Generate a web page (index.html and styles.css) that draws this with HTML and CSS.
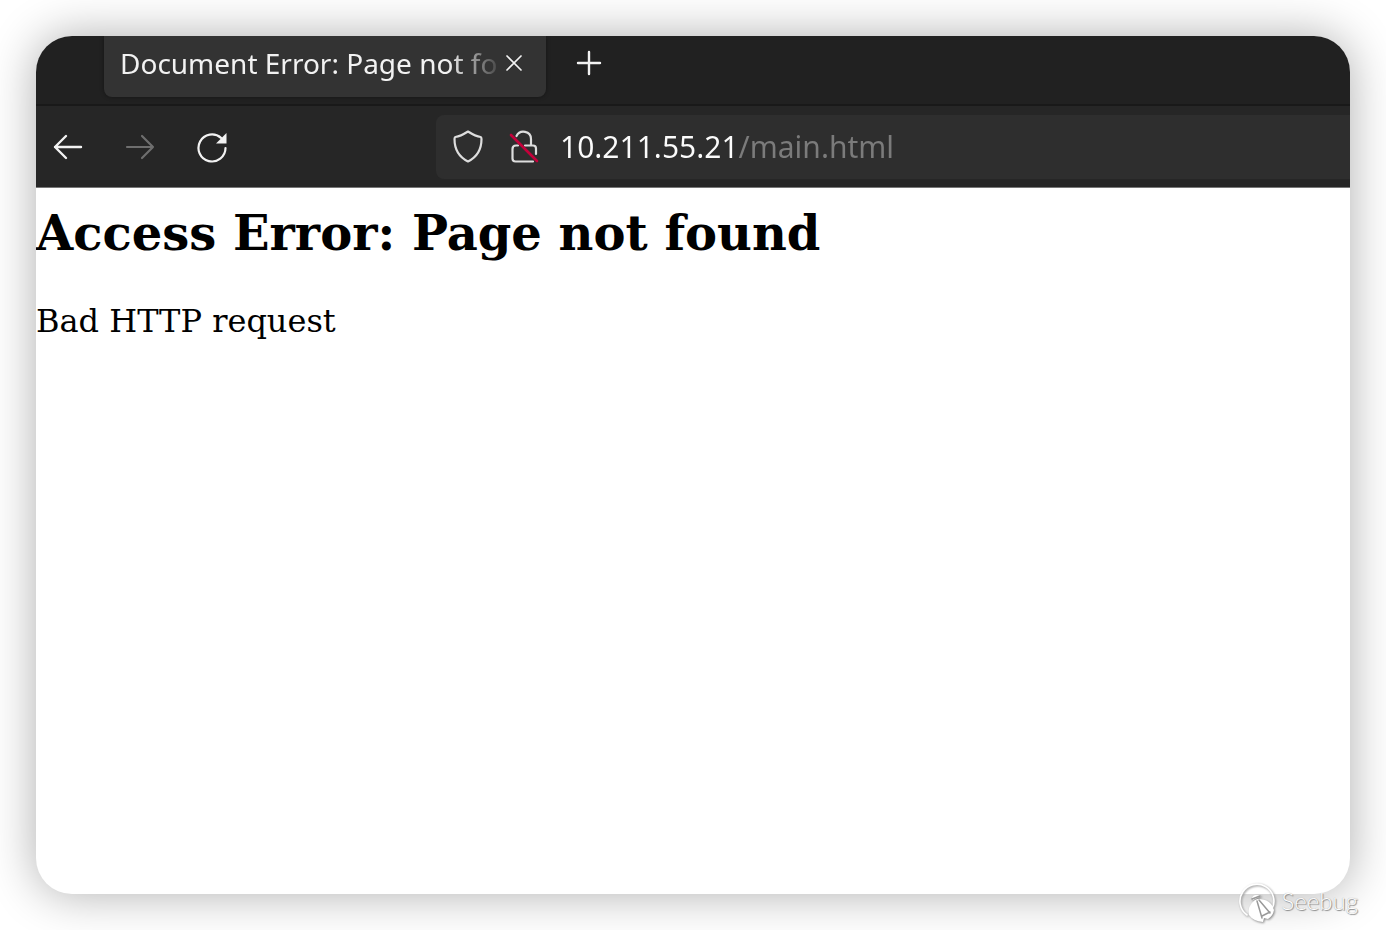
FILE: index.html
```
<!DOCTYPE html>
<html lang="en">
<head>
  <meta charset="UTF-8" />
  <title>Document Error: Page not found</title>
  <link rel="stylesheet" href="styles.css">
</head>
<body>

  <div class="window">
    <div class="tabs">
      <div class="tab">
        <span class="tab-title">Document Error: Page not fo</span>
        <button class="tab-close" aria-label="Close tab">
          <svg width="20" height="20" viewBox="0 0 20 20"><path d="M3 3l14 14M17 3L3 17" stroke-width="1.7" /></svg>
        </button>
      </div>
      <button class="new-tab" aria-label="New tab">
        <svg width="26" height="26" viewBox="0 0 26 26"><path d="M13 2v22M2 13h22" stroke-width="2.4" /></svg>
      </button>
    </div>

    <div class="toolbar">
      <div class="nav">
        <button aria-label="Back">
          <svg width="32" height="32" viewBox="0 0 32 32"><path d="M29 16H3M14 5L3 16l11 11" stroke-width="2.4" /></svg>
        </button>
        <button aria-label="Forward" disabled>
          <svg width="32" height="32" viewBox="0 0 32 32"><path d="M3 16h26M18 5l11 11-11 11" stroke-width="2.2" /></svg>
        </button>
        <button aria-label="Reload">
          <svg width="32" height="32" viewBox="0 0 32 32">
            <path d="M29.500 17A13.500 13.500 0 1 1 25 6.900" stroke-width="2.200" />
            <path class="solid" d="M30.500 2v10.500H20z" />
          </svg>
        </button>
      </div>

      <div class="urlbar">
        <svg width="32" height="36" viewBox="0 0 32 36"><path d="M16 2.500C12 5 7 7.500 3.400 8Q2.500 8.500 2.500 10C2.500 21 7 28 16 32.500C25 28 29.500 21 29.500 10Q29.500 8.500 28.600 8C25 7.500 20 5 16 2.500z" stroke-width="2.200" /></svg>
        <svg width="32" height="36" viewBox="0 0 32 36">
          <path d="M8.500 7C12 0 23 2 23 10V16.500M10 16.500H8Q4.500 16.500 4.500 20V29.500Q4.500 32.500 7.500 32.500H25M17 16.500h8q3 0 3 3V25" stroke-width="2.200" />
          <path class="slash" d="M3 6l26 26" />
        </svg>
        <input class="url" type="text" aria-label="Address" value="10.211.55.21/main.html" spellcheck="false" />
      </div>
    </div>

    <div class="page">
      <h2>Access Error: Page not found</h2>
      <p>Bad HTTP request</p>
    </div>
  </div>

  <div class="watermark">
    <svg width="40" height="44" viewBox="0 0 40 44">
      <path d="M9 34A17 17 0 1 1 34 28" stroke-width="1.600" />
      <path class="solid" d="M14 17q1-3 4-3t5 1l-8 4z" />
      <path class="solid" d="M17 19Q9 25 11 34q4 6 14 7l1-4 4 1q5-3 6-9Q33 18 20 18z" />
      <path class="line" d="M14 18l8-3M19 20l5 17M21 19l11 13M24 35l8-4" />
    </svg>
    <span>Seebug</span>
  </div>

</body>
</html>
```
FILE: styles.css
```
* { box-sizing: border-box; }

body {
  margin: 0;
  padding: 36px;
  background: #fff;
  font-family: "Noto Sans", sans-serif;
}

.window {
  min-height: calc(100vh - 72px);
  border-radius: 36px;
  overflow: hidden;
  background: #fff;
  box-shadow: 0 0 48px rgba(0,0,0,0.32);
}

button {
  display: flex;
  padding: 0;
  border: 0;
  background: none;
  color: #f2f2f2;
  cursor: pointer;
}

button:disabled { color: #6e6e6e; }

svg {
  display: block;
  flex: none;
  fill: none;
  stroke: currentColor;
  stroke-linecap: round;
  stroke-linejoin: round;
}

.solid { fill: currentColor; stroke: none; }

.tabs {
  display: flex;
  align-items: flex-start;
  gap: 30px;
  height: 70px;
  padding-left: 68px;
  background: #212121;
  border-bottom: 2px solid #191919;
}

.tab {
  display: flex;
  align-items: center;
  width: 442px;
  height: 61px;
  padding: 0 22px 8px 16px;
  border-radius: 0 0 8px 8px;
  background: #333;
  box-shadow: 0 0 4px rgba(0,0,0,0.4);
}

.tab-title {
  flex: 1;
  white-space: nowrap;
  font-size: 28px;
  color: #f2f2f2;
  -webkit-mask-image: linear-gradient(to left, transparent, #000 56px);
  mask-image: linear-gradient(to left, transparent, #000 56px);
}

.new-tab { padding-top: 14px; }

.toolbar {
  display: flex;
  align-items: center;
  height: 82px;
  padding-left: 16px;
  background: #262626;
  border-bottom: 1px solid #777;
}

.nav {
  display: flex;
  gap: 40px;
  width: 384px;
}

.urlbar {
  flex: 1;
  display: flex;
  align-items: center;
  gap: 24px;
  height: 64px;
  padding-left: 16px;
  border-radius: 8px 0 0 8px;
  background: #2e2e2e;
  color: #ddd;
}

.slash { stroke: #c4003a; stroke-width: 2.6; }

/* host is bright, the path after it is dimmed */
.url {
  flex: 1;
  min-width: 0;
  margin-left: -4px;
  padding: 0;
  border: 0;
  outline: 0;
  font: 30px "Noto Sans", sans-serif;
  color: transparent;
  caret-color: #fff;
  background: linear-gradient(to right, #fbfbfb 178px, #7b7b7b 178px);
  -webkit-background-clip: text;
  background-clip: text;
}

.page {
  font-family: "DejaVu Serif", serif;
  font-size: 32px;
  color: #000;
}

.page h2 {
  margin: 0;
  padding-top: 17px;
  font-size: 48px;
  line-height: 56px;
}

.page p {
  margin: 40px 0 0;
  line-height: 40px;
}

.watermark {
  position: absolute;
  right: 28px;
  bottom: 5px;
  display: flex;
  align-items: flex-start;
  gap: 4px;
  color: #fff;
  font: 300 24px/40px Lato, sans-serif;
  text-shadow: 1px 1px 1px #888, 0 0 1px #999;
}

.watermark svg { filter: drop-shadow(1px 1px 1px #888); }
.watermark .line { stroke: #999; stroke-width: 1.5; }
```
